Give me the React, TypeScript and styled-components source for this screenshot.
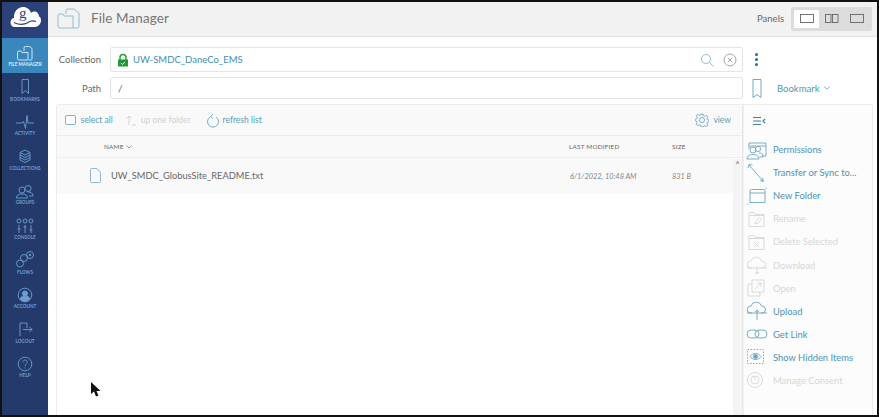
import React from "react";
import styled, { createGlobalStyle } from "styled-components";

const Global = createGlobalStyle`
  html, body { margin: 0; padding: 0; background: #fff; }
  #root { width: 879px; height: 417px; overflow: hidden; }
  * { box-sizing: border-box; }
`;

const LINE = "#6ba6c4";

const Frame = styled.div`
  width: 879px; height: 417px; display: flex; overflow: hidden;
  border: 2px solid #111;
  font-family: Lato, "Open Sans", sans-serif; background: #fff; position: relative;
`;
const Sidebar = styled.nav`
  width: 46px; flex: none; background: #243a6b; display: flex; flex-direction: column;
`;
const Logo = styled.div`
  height: 36px; background: #2a4279; display: flex; align-items: flex-start; justify-content: center; padding-top: 4px;
`;
const NavItem = styled.div<{ $active?: boolean }>`
  height: 34.6px; display: flex; flex-direction: column; align-items: center; justify-content: flex-end;
  padding-bottom: 5.5px; gap: 1.5px;
  background: ${p => (p.$active ? "#3a87bd" : "transparent")};
  color: ${p => (p.$active ? "#dceefa" : "#6b9fd0")};
  svg { display: block; }
`;
const NavLabel = styled.span`
  font-size: 4.6px; line-height: 5px; font-weight: 700; white-space: nowrap;
`;
const Main = styled.div`
  flex: 1; min-width: 0; display: flex; flex-direction: column;
`;
const Header = styled.header`
  height: 35px; flex: none; background: #f2f2f2; border-bottom: 1px solid #e3e3e3;
  display: flex; align-items: center; padding: 0 5px 2px 9px;
`;
const Title = styled.h1`
  margin: 0 0 0 10px; font-size: 13.5px; font-weight: 400; color: #777; letter-spacing: 0.1px; flex: 1;
`;
const PanelsLabel = styled.span`
  font-size: 9.5px; color: #666; margin-right: 7px;
`;
const PanelGroup = styled.div`
  display: flex; background: #dcdcdc; border-radius: 2px; padding: 3px; height: 24px; width: 81px; margin-top: 2px;
`;
const PanelBtn = styled.div<{ $active?: boolean }>`
  flex: 1; display: flex; align-items: center; justify-content: center; border-radius: 1px;
  background: ${p => (p.$active ? "#fff" : "transparent")};
`;
const Content = styled.div`
  flex: 1; display: flex; flex-direction: column; padding: 10px 5px 0 9px; min-height: 0;
`;
const FormRow = styled.div<{ $h: number }>`
  display: flex; align-items: center; height: ${p => p.$h}px; margin-bottom: 5px;
`;
const FieldLabel = styled.label`
  width: 44px; margin-right: 9px; text-align: right; font-size: 9.5px; color: #666; flex: none;
`;
const Field = styled.div`
  width: 633px; height: 100%; border: 1px solid #e4e4e4; border-radius: 2px; display: flex; align-items: center;
  padding: 0 5px 0 6px; background: #fff; flex: none;
`;
const CollectionName = styled.span`
  font-size: 9.5px; color: #3f8db0; margin-left: 4px; flex: 1;
`;
const PathText = styled.span`
  font-size: 10px; color: #666; margin-left: 1px;
`;
const Kebab = styled.div`
  width: 3px; margin-left: 12px; display: flex; flex-direction: column; gap: 2px;
  i { width: 3px; height: 3px; border-radius: 50%; background: #1f6f9f; display: block; }
`;
const BookmarkWrap = styled.div`
  display: flex; align-items: center; margin-left: 9px;
`;
const BookmarkText = styled.span`
  font-size: 9.5px; color: #4f96b5; margin: 0 3px 0 15px;
`;
const Panels = styled.div`
  flex: 1; display: flex; min-height: 0; margin-left: -1px; margin-right: -1px;
  border: 1px solid #ececec; border-bottom: 0; border-radius: 3px 3px 0 0;
`;
const ListPane = styled.section`
  width: 686px; flex: none; display: flex; flex-direction: column; border-right: 1px solid #e8e8e8; position: relative;
`;
const Toolbar = styled.div`
  height: 31px; flex: none; background: #f9f9f9; border-bottom: 1px solid #ececec;
  display: flex; align-items: center; padding: 0 11px 0 8px;
`;
const ToolBtn = styled.div<{ $off?: boolean; $gap?: number }>`
  display: flex; align-items: center; gap: 4px; margin-right: ${p => p.$gap ?? 0}px;
  font-size: 8.5px; color: ${p => (p.$off ? "#ced2d2" : "#5a9cb9")};
`;
const Spacer = styled.div` flex: 1; `;
const Check = styled.div`
  width: 10.5px; height: 10.5px; margin-right: 1px; border: 1px solid #7fb0cc; border-radius: 2px; background: #fff;
`;
const ColHead = styled.div`
  height: 22px; flex: none; background: #f9f9f9; border-bottom: 1px solid #efefef;
  display: flex; align-items: center; font-size: 6.4px; color: #666; letter-spacing: .2px;
`;
const HeadName = styled.div` width: 512px; padding-left: 47px; display: flex; align-items: center; gap: 2px; `;
const HeadMod = styled.div` width: 103px; `;
const Row = styled.div`
  height: 36px; flex: none; background: #f9f9f9; display: flex; align-items: center; margin-right: 9px;
`;
const RowName = styled.div`
  width: 512px; padding-left: 32px; display: flex; align-items: center; gap: 9px;
  font-size: 9.3px; color: #666; padding-bottom: 2px;
`;
const RowMod = styled.div` width: 103px; font-size: 7.4px; font-style: italic; color: #888; padding-left: 1px; `;
const RowSize = styled.div` font-size: 7.4px; font-style: italic; color: #888; `;
const Scroll = styled.div`
  position: absolute; right: 0; top: 54px; bottom: 0; width: 9px; background: #f4f4f4;
  color: #555; font-size: 7px; text-align: center; line-height: 11px;
`;
const Cursor = styled.svg` position: absolute; left: 33px; top: 276px; `;
const Side = styled.aside`
  flex: 1; display: flex; flex-direction: column; background: #fcfcfc; border-left: 1px solid #f0f0f0; position: relative;
`;
const SideHead = styled.div`
  height: 31px; flex: none; display: flex; align-items: center; padding-left: 9px;
`;
const Actions = styled.ul`
  list-style: none; margin: 0; padding: 2px 0 0 2px; display: flex; flex-direction: column;
`;
const Action = styled.li<{ $off?: boolean }>`
  height: 23.1px; display: flex; align-items: center; font-size: 9.4px; white-space: nowrap;
  color: ${p => (p.$off ? "#d4d7d7" : "#4d93b2")};
`;
const ActionIcon = styled.span`
  width: 27px; flex: none; display: flex; justify-content: flex-start; svg { display: block; }
`;

const S = (p: React.SVGProps<SVGSVGElement> & { s?: number; w?: number; h?: number }) => {
  const { s = 16, w, h, children, ...r } = p;
  return <svg width={w ?? s} height={h ?? s} viewBox={`0 0 ${w ?? s} ${h ?? s}`} fill="none" stroke="currentColor" strokeWidth={0.9} {...r}>{children}</svg>;
};

const navItems: [string, React.ReactNode][] = [
  ["FILE MANAGER", <S w={18} h={16} key="a"><path d="M1.5 7.5a1.500 1.500 0 0 1 1.500-1.500h2l1 1.500h6v7.500H3a1.500 1.500 0 0 1-1.500-1.500z M8 6V3a1.500 1.500 0 0 1 1.500-1.500h4l2.500 2V14a1 1 0 0 1-1 1h-2" /></S>],
  ["BOOKMARKS", <S w={12} h={17} key="b"><path d="M3 1.500h6.500V15.500l-3.200-3-3.300 3z" /></S>],
  ["ACTIVITY", <S w={20} h={16} key="c"><path d="M1 9h6l1.500-1.500 2 7 1.500-13 1 7.500h6" /></S>],
  ["COLLECTIONS", <S w={14} h={15} key="d"><path d="M7 1l5 2.500-5 2.500-5-2.500z M2 3.500v2.500l5 2.500 5-2.500V3.500 M2 6v2.500l5 2.500 5-2.500V6 M2 8.500v2.500l5 2.500 5-2.500V8.500" /></S>],
  ["GROUPS", <S w={20} h={15} key="e"><circle cx="7" cy="6" r="3" /><circle cx="13" cy="4.500" r="3" /><path d="M1.500 14c0-3 2-4 5.500-4s5.500 1 5.500 4z M13 8c3 0 5 1 5 4h-4" /></S>],
  ["CONSOLE", <S w={20} h={16} key="f"><circle cx="4" cy="3" r="2" /><circle cx="10" cy="3" r="2" /><circle cx="16" cy="3" r="2" /><path d="M4 7v8 M10 7v8 M16 7v8" /><path d="M2.500 11h3 M8.500 9h3 M14.500 12h3" /></S>],
  ["FLOWS", <S w={20} h={17} key="g"><circle cx="15" cy="4" r="3.500" /><circle cx="9" cy="7" r="3.500" /><circle cx="5" cy="12.500" r="3.500" /><circle cx="15" cy="4" r=".8" fill="currentColor" /></S>],
  ["ACCOUNT", <S w={16} h={16} key="h"><circle cx="8" cy="8" r="6.800" /><circle cx="8" cy="6.500" r="2.600" fill="currentColor" /><path d="M3 12c.8-2.200 2.600-3 5-3s4.200.8 5 3a6.500 6.500 0 0 1-10 0z" fill="currentColor" /></S>],
  ["LOGOUT", <S w={16} h={16} key="i"><path d="M10 7V2H3v13 M6 8.500h9 M12.500 6l2.500 2.500-2.500 2.500" /></S>],
  ["HELP", <S w={16} h={16} key="j"><circle cx="8" cy="8" r="6.800" /><path d="M5.800 6.300c0-3 4.500-3 4.500 0 0 1.800-2.300 1.700-2.300 3.700 M8 11.300v1.200" /></S>],
];

const fold = (extra: React.ReactNode) => (
  <S w={22} h={18}><path d="M3 5.500V3.500a1 1 0 0 1 1-1h4l1.500 2H18v12H3z M3 5.500h15" />{extra}</S>
);

const actions: [string, boolean, React.ReactNode][] = [
  ["Permissions", false, <S w={24} h={20} stroke={LINE}><path d="M3 3h17v13h-4 M3 3v6 M3 6h17" /><circle cx="7" cy="10" r="3" /><circle cx="12" cy="9" r="2.600" /><path d="M1 19c0-3 2.500-4.500 6-4.500s6 1.500 6 4.500z M13 13c2.500 0 4 1 4 4h-3.500" /></S>],
  ["Transfer or Sync to...", false, <S w={20} h={20} stroke={LINE}><path d="M3 2l14 16 M2 5l1-3.500 3.500.5 M14 17.500l3.500 1-1-3.500" /></S>],
  ["New Folder", false, <S w={22} h={20} stroke={LINE}><path d="M4 5a1.500 1.500 0 0 1 1.500-1.500h12a1.500 1.500 0 0 1 1.500 1.500v11.500H4z M4 7h15" /><path d="M1 18.500l3-2 M18.500 3.500l3-2" strokeDasharray="1 1" /></S>],
  ["Rename", true, fold(<path d="M9 14l.5-2.500 4-4 2 2-4 4z" />)],
  ["Delete Selected", true, fold(<path d="M8 9l5 5 M13 9l-5 5" />)],
  ["Download", true, <S w={22} h={20}><path d="M6 13H4.500a3.500 3.500 0 0 1 .5-7 5.500 5.500 0 0 1 10.500 0 3.500 3.500 0 0 1 1 7H15 M1 13h20 M11 11v8 M9 17l2 2 2-2" /></S>],
  ["Open", true, <S w={20} h={20}><path d="M6 6H2v12h12v-4 M6 2h12v12H6z M9 11l6-6 M11 5h4v4" /></S>],
  ["Upload", false, <S w={22} h={20} stroke={LINE}><path d="M6 12H4.500a3.500 3.500 0 0 1 .5-7 5.500 5.500 0 0 1 10.500 0 3.500 3.500 0 0 1 1 7H15 M1 12h20 M11 19V9 M9 11l2-2 2 2" /></S>],
  ["Get Link", false, <S w={22} h={14} stroke={LINE}><rect x="1" y="3" width="12" height="8" rx="4" /><rect x="9" y="3" width="12" height="8" rx="4" /></S>],
  ["Show Hidden Items", false, <S w={20} h={18} stroke={LINE}><rect x="1.500" y="1.500" width="16" height="14" strokeDasharray="1.500 1.500" /><path d="M4 8.500c3-4 8-4 11 0-3 4-8 4-11 0z" /><circle cx="9.500" cy="8.500" r="2" fill={LINE} /></S>],
  ["Manage Consent", true, <S w={18} h={18}><circle cx="9" cy="9" r="7.500" /><circle cx="9" cy="9" r="4" /><path d="M9 5v4" /></S>],
];

export default function App() {
  return (
    <Frame>
      <Global />
      <Sidebar>
        <Logo>
          <svg width="31" height="23" viewBox="0 0 31 23">
            <path d="M5 21C2 21 .5 19 .5 16.500S2.500 12 4 12C3.500 6 7.500 1 13 1c4 0 7 2.500 8 6 1-1 2-1.500 3.500-1.500 2.500 0 4.500 2 4.500 5 1.500.5 2 2 2 4 0 3.500-3 6.500-6 6.500z" fill="#fff" />
            <path d="M4 16.500c5 2.500 9 3 14 0 2-1.500 5-2 8-1" stroke="#2a4279" strokeWidth={1.200} fill="none" />
            <text x="9" y="12" fontSize="15" fontWeight="400" fontFamily="Liberation Serif, serif" fill="#2a4279">g</text>
          </svg>
        </Logo>
        {navItems.map(([label, icon], i) => (
          <NavItem key={label} $active={i === 0}>{icon}<NavLabel>{label}</NavLabel></NavItem>
        ))}
      </Sidebar>
      <Main>
        <Header>
          <S w={24} h={21} stroke="#8ab6d0"><path d="M1 8a2 2 0 0 1 2-2h3l1 2h9v12H3a2 2 0 0 1-2-2z M9 6V3a2 2 0 0 1 2-2h6l5 4v13a2 2 0 0 1-2 2h-4" /></S>
          <Title>File Manager</Title>
          <PanelsLabel>Panels</PanelsLabel>
          <PanelGroup>
            <PanelBtn $active><S w={14} h={10} stroke="#666"><rect x=".5" y=".5" width="13" height="8" /></S></PanelBtn>
            <PanelBtn><S w={14} h={10} stroke="#666"><rect x=".5" y=".5" width="5.500" height="8" /><rect x="7.500" y=".5" width="5.500" height="8" /></S></PanelBtn>
            <PanelBtn><S w={14} h={10} stroke="#666"><rect x=".5" y=".5" width="13" height="8" /></S></PanelBtn>
          </PanelGroup>
        </Header>
        <Content>
          <FormRow $h={25}>
            <FieldLabel>Collection</FieldLabel>
            <Field>
              <S w={12} h={14}><path d="M3 7V4.500a3 3 0 0 1 6 0V7" stroke="#2e9e3a" strokeWidth={1.500} /><rect x="1" y="6.500" width="10" height="7" fill="#1f9a35" stroke="none" /><path d="M4 10l1.500 1.500L8 9" stroke="#fff" /></S>
              <CollectionName>UW-SMDC_DaneCo_EMS</CollectionName>
              <S w={14} h={14} stroke="#7fb6cf"><circle cx="6" cy="6" r="4.500" /><path d="M9.500 9.500L13.500 13.500" /></S>
              <S w={14} h={14} stroke="#999" style={{ marginLeft: 9 }}><circle cx="7" cy="7" r="6" /><path d="M4.800 4.800l4.400 4.400 M9.200 4.800l-4.400 4.400" /></S>
            </Field>
            <Kebab><i /><i /><i /></Kebab>
          </FormRow>
          <FormRow $h={22}>
            <FieldLabel>Path</FieldLabel>
            <Field><PathText>/</PathText></Field>
            <BookmarkWrap>
              <S w={10} h={21} stroke="#5f9fbf"><path d="M1 1.500h8V19.500l-4-3-4 3z" /></S>
              <BookmarkText>Bookmark</BookmarkText>
              <S w={8} h={6} stroke="#7fa8c0"><path d="M1 1.500l3 2.500 3-2.500" /></S>
            </BookmarkWrap>
          </FormRow>
          <Panels>
            <ListPane>
              <Toolbar>
                <ToolBtn $gap={12}><Check />select all</ToolBtn>
                <ToolBtn $off $gap={15}><S w={12} h={12}><path d="M4 11V2 M1.500 4.500L4 2l2.500 2.500 M7 11h4" /></S>up one folder</ToolBtn>
                <ToolBtn><S w={13} h={15} stroke={LINE}><path d="M4 4a5.500 5.500 0 1 0 6 0 M7 1L4.500 3.500 7 5.500" /></S>refresh list</ToolBtn>
                <Spacer />
                <ToolBtn><S w={14} h={14} stroke={LINE}><circle cx="7" cy="7" r="2.500" /><path d="M6 1h2l.4 1.700 1.500.6L11.500 2.400l1.400 1.400-1 1.500.6 1.500 1.700.4v1.600l-1.700.4-.6 1.500 1 1.500-1.400 1.400-1.600-.9-1.500.6L8 14H6l-.4-1.700-1.500-.6-1.600.9L1.100 11.200l1-1.500-.6-1.500L.1 7.800V6.200l1.700-.4.6-1.500-1-1.500L2.500 1.400l1.600.9 1.500-.6z" /></S>view</ToolBtn>
              </Toolbar>
              <ColHead>
                <HeadName>NAME <S w={6} h={4} stroke="#5f9fbf"><path d="M.5.5l2.500 2.500L5.500.5" /></S></HeadName>
                <HeadMod>LAST MODIFIED</HeadMod>
                <div>SIZE</div>
              </ColHead>
              <Row>
                <RowName>
                  <S w={13} h={17} stroke="#7fb0cc"><path d="M1.500 2.500a1 1 0 0 1 1-1H8l3.500 4V14.500a1 1 0 0 1-1 1h-8a1 1 0 0 1-1-1z" /></S>
                  UW_SMDC_GlobusSite_README.txt
                </RowName>
                <RowMod>6/1/2022, 10:48 AM</RowMod>
                <RowSize>831 B</RowSize>
              </Row>
              <Scroll>^</Scroll>
              <Cursor width="13" height="17" viewBox="0 0 13 17"><path d="M1 1v12l3-2.500 2 5 2.500-1-2-4.500h4z" fill="#111" /></Cursor>
            </ListPane>
            <Side>
              <SideHead>
                <S w={13} h={10} stroke="#3f7f9f" strokeWidth={1.200}><path d="M0 1.500h8 M0 5h8 M0 8.500h8 M12 3L10 5l2 2" /></S>
              </SideHead>
              <Actions>
                {actions.map(([label, off, icon]) => (
                  <Action key={label} $off={off}><ActionIcon>{icon}</ActionIcon>{label}</Action>
                ))}
              </Actions>
            </Side>
          </Panels>
        </Content>
      </Main>
    </Frame>
  );
}
